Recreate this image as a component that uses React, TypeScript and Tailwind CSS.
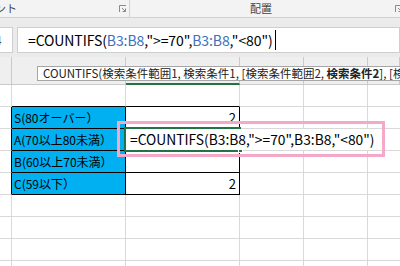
import React from "react";

const FONT = "font-['Noto_Sans_CJK_JP','Noto_Sans',sans-serif]";

function Launcher() {
  return (
    <svg width="8" height="8" viewBox="0 0 8 8" fill="none" stroke="#8a8a8a" strokeWidth="1">
      <path d="M0.5 7V0.5H7" />
      <path d="M3 3L6.5 6.5M6.5 3.5V6.5H3.5" />
    </svg>
  );
}

const rows: ({ label: string; value: string } | null)[] = [
  null,
  { label: "S(80オーバー）", value: "2" },
  { label: "A(70以上80未満）", value: "" },
  { label: "B(60以上70未満）", value: "" },
  { label: "C(59以下）", value: "2" },
  null,
  null,
  null,
  null,
];

export default function App() {
  return (
    <div className={`h-[266px] w-[400px] overflow-hidden bg-white text-black ${FONT}`}>
      {/* ribbon strip */}
      <div className="flex h-[18px] border-b border-b-[#d2d2d2] bg-[#f3f3f3]">
        <div className="flex w-[130px] items-center justify-between border-r border-r-[#d2d2d2] pr-[2px]">
          <span className="-ml-[5px] text-[11px] leading-none text-[#444]">ント</span>
          <Launcher />
        </div>
        <div className="flex flex-1 items-center">
          <span className="ml-[120px] text-[11px] leading-none text-[#444]">配置</span>
          <span className="ml-auto -mr-[3px]">
            <Launcher />
          </span>
        </div>
      </div>

      {/* formula bar */}
      <div className="flex h-[39px] gap-[4px] bg-[#ebebeb] pt-[9px]">
        <div className="flex h-[26px] w-[13px] items-center overflow-hidden border-r border-y border-r-[#cfcfcf] border-y-[#cfcfcf] bg-white">
          <span className="-ml-[5px] text-[12px] leading-none text-[#555]">4</span>
        </div>
        <div className="flex h-[26px] flex-1 items-center border border-[#cfcfcf] bg-white pl-[10px] text-[14px] leading-none tracking-[-0.1px]">
          <span>=COUNTIFS(</span>
          <span className="text-[#3b6fc0]">B3:B8</span>
          <span>,"&gt;=70",</span>
          <span className="text-[#3b6fc0]">B3:B8</span>
          <span>,"&lt;80")</span>
          <span className="ml-[2px] h-[20px] w-px bg-black" />
        </div>
      </div>

      {/* sheet */}
      <div className="relative">
        <div className="grid grid-cols-[12px_114px_114px_64px_64px_1fr]">
          {["", "", "", "", "", ""].map((_, c) => (
            <div
              key={`h${c}`}
              className={`h-[28px] bg-[#efefef] border-r border-r-[#cacaca] ${
                c === 2 ? "border-b-2 border-b-[#217346]" : "border-b border-b-[#cacaca]"
              }`}
            />
          ))}

          {rows.map((row, r) => {
            const inRange = row !== null;
            const above = r === 0;
            const edge = (bottomBlack: boolean, rightBlack: boolean) =>
              `border-r border-b ${rightBlack ? "border-r-black" : "border-r-[#d9d9d9]"} ${
                bottomBlack ? "border-b-black" : "border-b-[#d9d9d9]"
              }`;
            return (
              <React.Fragment key={r}>
                <div className={`h-[22px] ${edge(false, inRange)}`} />
                <div
                  className={`flex h-[22px] items-center pl-[2px] text-[12px] leading-none ${edge(
                    inRange || above,
                    inRange
                  )} ${inRange ? "bg-[#00b0f0]" : ""}`}
                >
                  {row?.label}
                </div>
                <div
                  className={`flex h-[22px] items-center justify-end pr-[3px] text-[13px] leading-none ${edge(
                    inRange || above,
                    inRange
                  )}`}
                >
                  {row?.value}
                </div>
                <div className={`h-[22px] ${edge(false, false)}`} />
                <div className={`h-[22px] ${edge(false, false)}`} />
                <div className="h-[22px] border-b border-b-[#d9d9d9]" />
              </React.Fragment>
            );
          })}
        </div>

        {/* function tooltip */}
        <div className="absolute left-[37px] top-[9px] flex h-[15px] w-[380px] items-center overflow-hidden whitespace-pre border border-[#a6a6a6] bg-white pl-[5px] text-[11.5px] leading-none text-[#222]">
          <span>COUNTIFS(検索条件範囲1, 検索条件1, [検索条件範囲2, </span>
          <b className="font-bold">検索条件2</b>
          <span>], [検索</span>
        </div>

        {/* active cell being edited */}
        <div className="absolute left-[124px] top-[70px] h-[25px] w-[117px] border-y-2 border-l-2 border-[#217346]" />
        <div className="absolute left-[238px] top-[91px] h-[5px] w-[5px] border border-white bg-[#217346]" />
        <div className="absolute left-[126px] top-[72px] flex h-[21px] w-[252px] items-center whitespace-nowrap bg-white pl-[4px] text-[13.8px] leading-none">
          =COUNTIFS(B3:B8,"&gt;=70",B3:B8,"&lt;80")
        </div>

        {/* annotation frame */}
        <div className="absolute left-[117px] top-[64px] h-[36px] w-[268px] border-[3px] border-[#f4a9c8]" />
      </div>
    </div>
  );
}
